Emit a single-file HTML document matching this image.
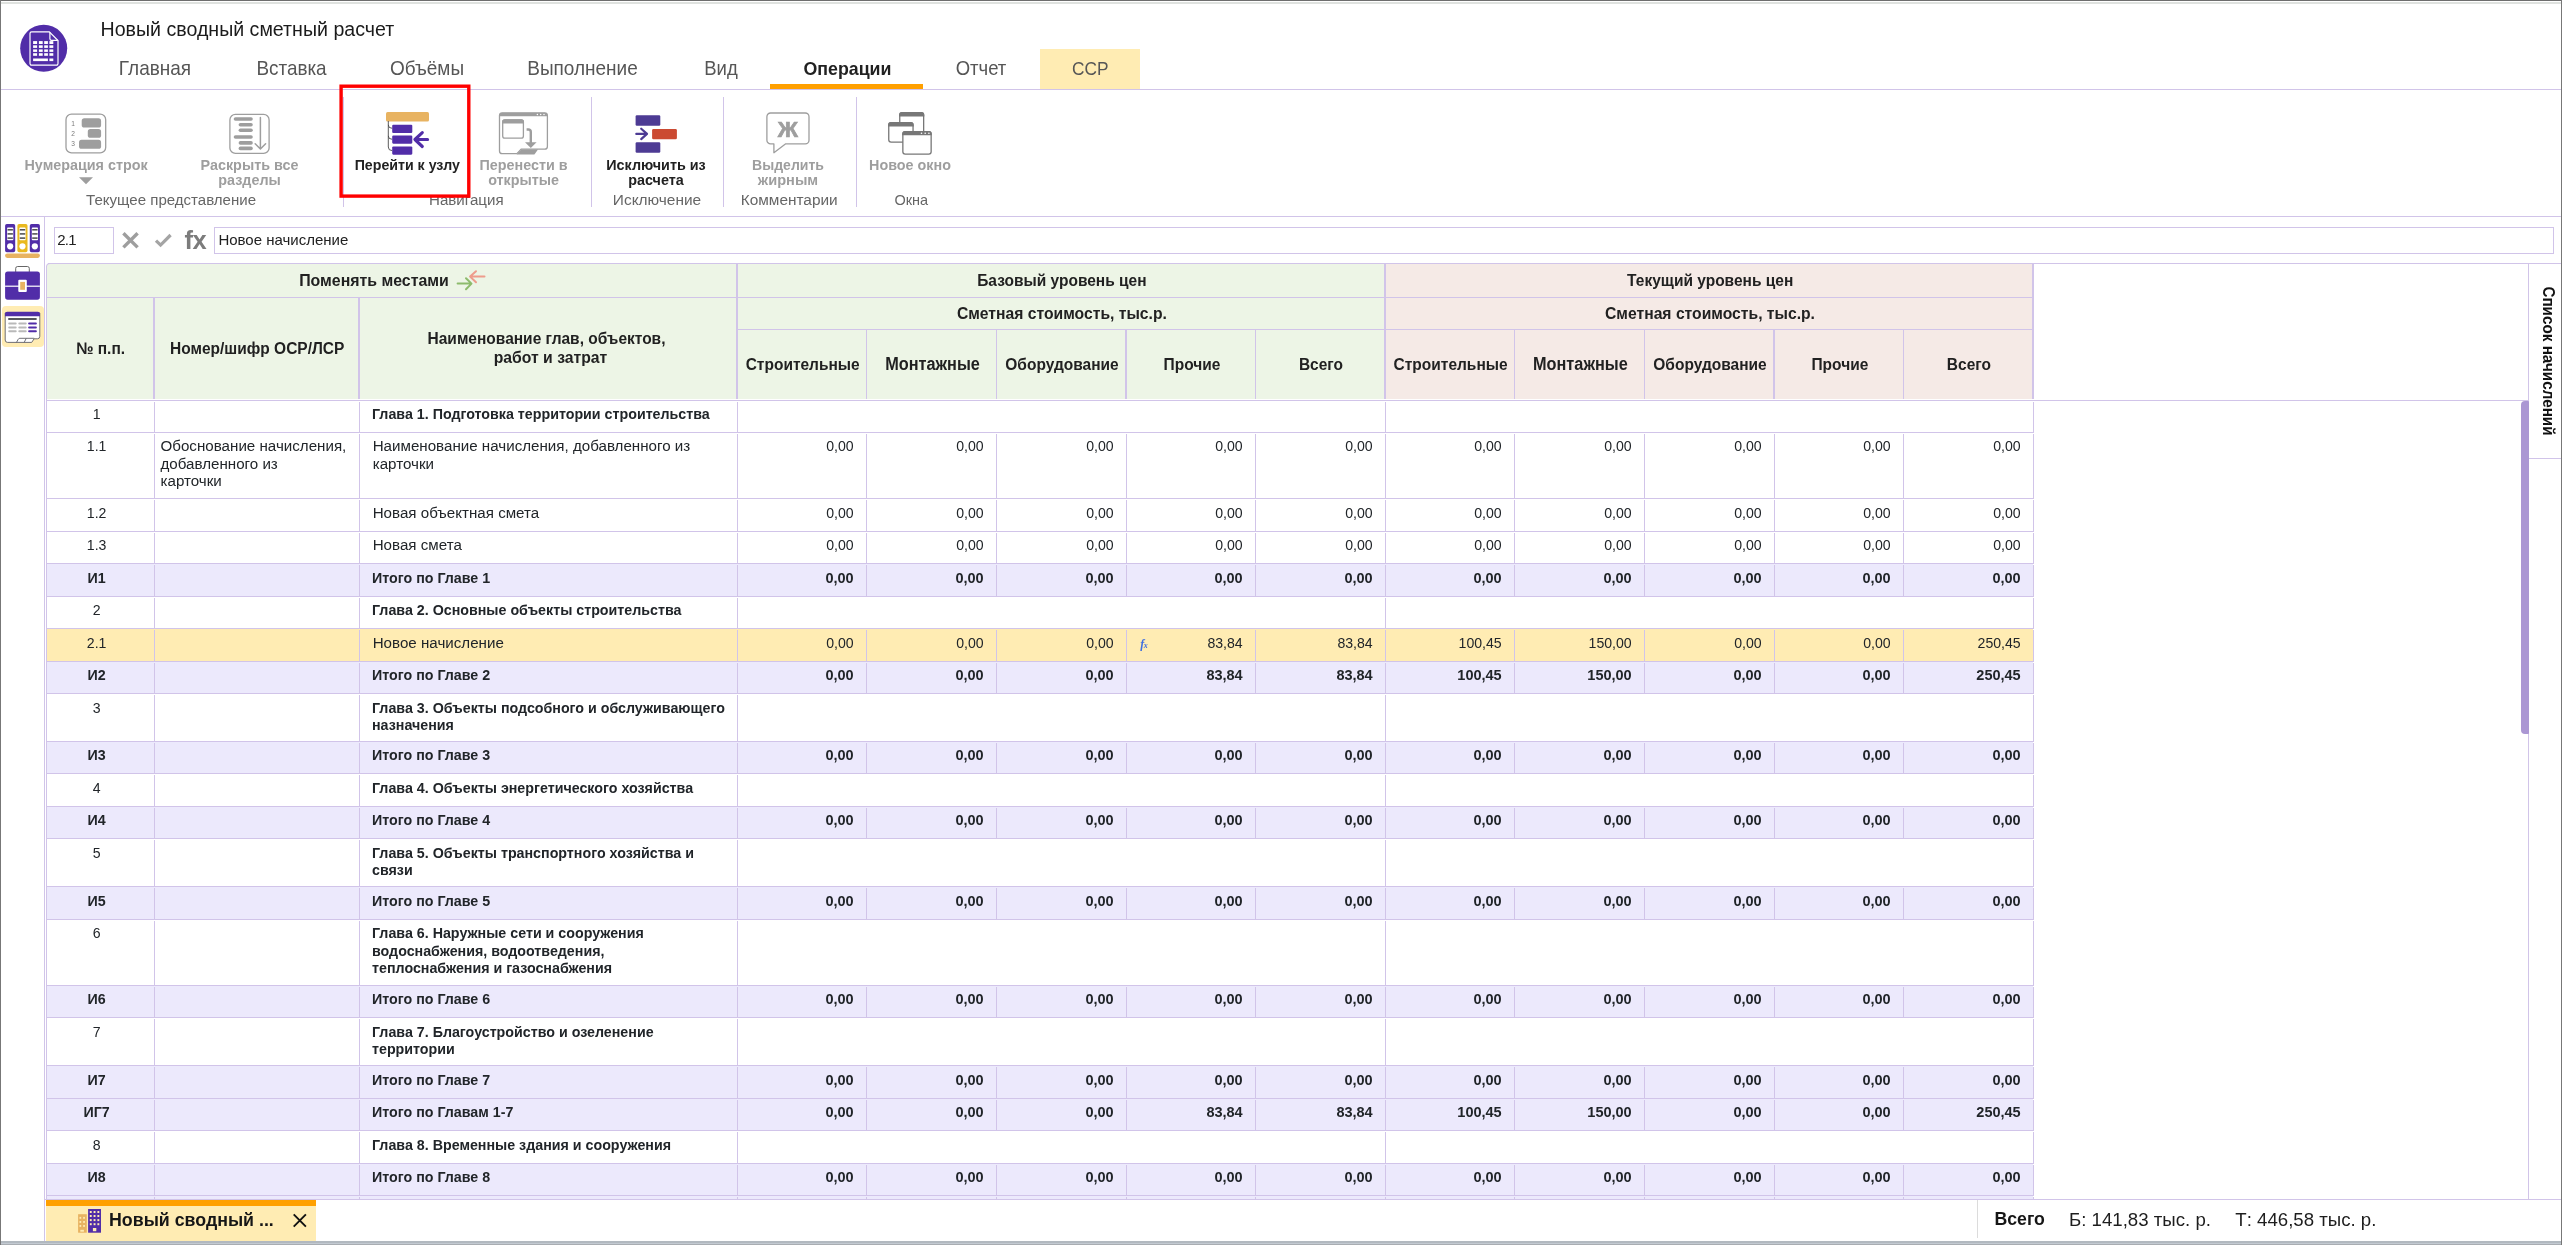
<!DOCTYPE html>
<html lang="ru"><head><meta charset="utf-8"><title>Новый сводный сметный расчет</title>
<style>
html,body{margin:0;padding:0;background:#fff;}
body{width:2562px;height:1245px;overflow:hidden;position:relative;font-family:"Liberation Sans",sans-serif;}
#app{position:absolute;left:0;top:0;width:2562px;height:1245px;overflow:hidden;will-change:transform;}
#app div,#app svg{position:absolute;}
.t{white-space:nowrap;}
</style></head>
<body><div id="app">
<svg style="left:19px;top:23px;" width="50" height="51" viewBox="19 23 50 51"><circle cx="43.7" cy="48.3" r="23.5" fill="#512da8"/><path d="M31.6 31.9 H49.3 L58 40.6 V63.6 a1.6 1.6 0 0 1 -1.6 1.6 H31.6 a1.6 1.6 0 0 1 -1.6 -1.6 V33.5 a1.6 1.6 0 0 1 1.6 -1.6 Z" fill="none" stroke="#fff" stroke-width="1.2"/><path d="M49.9 32.2 V38.7 a1.6 1.6 0 0 0 1.6 1.6 H57.7" fill="none" stroke="#fff" stroke-width="1.2"/><rect x="33.1" y="41.1" width="4.0" height="2.9" fill="#fff"/><rect x="33.1" y="45.3" width="4.0" height="2.6" fill="#fff"/><rect x="33.1" y="49.4" width="4.0" height="2.5" fill="#fff"/><rect x="33.1" y="53.2" width="4.0" height="2.6" fill="#fff"/><rect x="38.9" y="41.1" width="3.8" height="2.9" fill="#fff"/><rect x="38.9" y="45.3" width="3.8" height="2.6" fill="#fff"/><rect x="38.9" y="49.4" width="3.8" height="2.5" fill="#fff"/><rect x="38.9" y="53.2" width="3.8" height="2.6" fill="#fff"/><rect x="44.2" y="41.1" width="3.7" height="2.9" fill="#fff"/><rect x="44.2" y="45.3" width="3.7" height="2.6" fill="#fff"/><rect x="44.2" y="49.4" width="3.7" height="2.5" fill="#fff"/><rect x="44.2" y="53.2" width="3.7" height="2.6" fill="#fff"/><rect x="49.4" y="41.1" width="3.9" height="2.9" fill="#fff"/><rect x="49.4" y="45.3" width="3.9" height="2.6" fill="#fff"/><rect x="49.4" y="49.4" width="3.9" height="2.5" fill="#fff"/><rect x="49.4" y="53.2" width="3.9" height="2.6" fill="#fff"/><rect x="33.1" y="58.5" width="14.8" height="2.6" fill="#fff"/><rect x="49.4" y="58.5" width="3.9" height="2.6" fill="#fff"/></svg>
<div class="t" style="top:18px;font-size:19.6px;line-height:22px;color:#1b1b1b;left:100.5px;">Новый сводный сметный расчет</div>
<div style="left:1040px;top:49px;width:100px;height:40px;background:#ffecb3;"></div>
<div class="t" style="top:58px;font-size:19px;line-height:21px;color:#565656;left:75px;width:160px;text-align:center;transform:scaleY(1.07);transform-origin:50% 17px;">Главная</div>
<div class="t" style="top:58px;font-size:18.9px;line-height:21px;color:#565656;left:211.5px;width:160px;text-align:center;transform:scaleY(1.07);transform-origin:50% 17px;">Вставка</div>
<div class="t" style="top:58px;font-size:19px;line-height:21px;color:#565656;left:347px;width:160px;text-align:center;transform:scaleY(1.07);transform-origin:50% 17px;">Объёмы</div>
<div class="t" style="top:58px;font-size:19px;line-height:21px;color:#565656;left:502.5px;width:160px;text-align:center;transform:scaleY(1.07);transform-origin:50% 17px;">Выполнение</div>
<div class="t" style="top:58px;font-size:18.5px;line-height:21px;color:#565656;left:641px;width:160px;text-align:center;transform:scaleY(1.07);transform-origin:50% 17px;">Вид</div>
<div class="t" style="top:58px;font-size:18.5px;line-height:21px;color:#565656;left:901px;width:160px;text-align:center;transform:scaleY(1.07);transform-origin:50% 17px;">Отчет</div>
<div class="t" style="top:59px;font-size:17.3px;line-height:20px;color:#565656;left:1010.2px;width:160px;text-align:center;transform:scaleY(1.07);transform-origin:50% 16px;">ССР</div>
<div class="t" style="top:59px;font-size:17.75px;line-height:20px;font-weight:bold;color:#212121;left:767.5px;width:160px;text-align:center;">Операции</div>
<div style="left:1px;top:89px;width:2560px;height:1px;background:#d1c4e9;"></div>
<div style="left:770px;top:84px;width:153px;height:5px;background:#ffa000;"></div>
<div style="left:343px;top:97px;width:1px;height:110px;background:#d1c4e9;"></div>
<div style="left:591px;top:97px;width:1px;height:110px;background:#d1c4e9;"></div>
<div style="left:723px;top:97px;width:1px;height:110px;background:#d1c4e9;"></div>
<div style="left:856px;top:97px;width:1px;height:110px;background:#d1c4e9;"></div>
<svg style="left:63px;top:111px;" width="46" height="46" viewBox="63 111 46 46"><rect x="66" y="114.2" width="39.7" height="38.7" rx="5.5" ry="5.5" fill="none" stroke="#9e9e9e" stroke-width="1.3"/><rect x="81.7" y="118.3" width="19.4" height="9.2" rx="2.6" ry="2.6" fill="#9e9e9e"/><rect x="87.8" y="129.1" width="13.3" height="8.7" rx="2.6" ry="2.6" fill="#9e9e9e"/><rect x="79" y="139.8" width="22.1" height="9" rx="2.6" ry="2.6" fill="#9e9e9e"/><text x="73.2" y="126.2" font-size="6.6" text-anchor="middle" fill="#7a7a7a" font-family='"Liberation Sans",sans-serif'>1</text><text x="73.2" y="136" font-size="6.6" text-anchor="middle" fill="#7a7a7a" font-family='"Liberation Sans",sans-serif'>2</text><text x="73.2" y="145.8" font-size="6.6" text-anchor="middle" fill="#7a7a7a" font-family='"Liberation Sans",sans-serif'>3</text></svg>
<svg style="left:227px;top:111px;" width="46" height="46" viewBox="227 111 46 46"><rect x="229.9" y="114.4" width="39.2" height="39" rx="5.5" ry="5.5" fill="none" stroke="#9e9e9e" stroke-width="1.3"/><rect x="233.7" y="117.2" width="19.1" height="3.6" rx="1.8" ry="1.8" fill="#9e9e9e"/><rect x="238.6" y="122.9" width="14.2" height="3.7" rx="1.8" ry="1.8" fill="#9e9e9e"/><rect x="238.6" y="128.4" width="14.2" height="3.7" rx="1.8" ry="1.8" fill="#9e9e9e"/><rect x="233.7" y="135.2" width="19.1" height="3.6" rx="1.8" ry="1.8" fill="#9e9e9e"/><rect x="238.6" y="141.1" width="14.2" height="3.6" rx="1.8" ry="1.8" fill="#9e9e9e"/><rect x="238.6" y="146.6" width="14.2" height="3.6" rx="1.8" ry="1.8" fill="#9e9e9e"/><path d="M260.4 117.5 V148.6 M255.2 143.8 L260.4 149 L265.6 143.8" fill="none" stroke="#9e9e9e" stroke-width="1.5" stroke-linecap="round" stroke-linejoin="round"/></svg>
<svg style="left:384px;top:110px;" width="48" height="47" viewBox="384 110 48 47"><rect x="386" y="112.1" width="43" height="9.4" rx="1.6" ry="1.6" fill="#e8b361"/><path d="M388.3 121 V147 q0 3.6 3.9 3.6 M388.3 124.9 q0 3.4 3.9 3.4 M388.3 135.9 q0 3.4 3.9 3.4" fill="none" stroke="#4a4a4a" stroke-width="0.9"/><rect x="392.2" y="124.7" width="20.1" height="8.3" rx="1.1" ry="1.1" fill="#512da8"/><rect x="392.2" y="135.6" width="20.1" height="8.1" rx="1.1" ry="1.1" fill="#512da8"/><rect x="392.2" y="146.4" width="20.1" height="8.3" rx="1.1" ry="1.1" fill="#512da8"/><path d="M427.6 139.5 H416 M422.3 132.6 L414.9 139.5 L422.3 146.5" fill="none" stroke="#512da8" stroke-width="3.1" stroke-linecap="round" stroke-linejoin="round"/></svg>
<svg style="left:496px;top:110px;" width="55" height="47" viewBox="496 110 55 47"><path d="M502.2 112.8 H544.7 a2.7 2.7 0 0 1 2.7 2.7 V146.4 a2.7 2.7 0 0 1 -2.7 2.7 H521.2 L516.9 153.7 H502.2 a2.7 2.7 0 0 1 -2.7 -2.7 V115.5 a2.7 2.7 0 0 1 2.7 -2.7 Z" fill="none" stroke="#9e9e9e" stroke-width="1.3"/><path d="M499.4 116.3 V115.5 a2.8 2.8 0 0 1 2.8 -2.8 H544.7 a2.8 2.8 0 0 1 2.8 2.8 V116.3 Z" fill="#9e9e9e"/><circle cx="537.4" cy="114.5" r="0.75" fill="#fff"/><circle cx="540.7" cy="114.5" r="0.75" fill="#fff"/><circle cx="544" cy="114.5" r="0.75" fill="#fff"/><path d="M521.4 149.4 H538 L534.4 154.4 H516.6 Z" fill="#9e9e9e"/><rect x="502.7" y="119.8" width="20.7" height="18.4" rx="2.2" ry="2.2" fill="none" stroke="#9e9e9e" stroke-width="1.3"/><path d="M502.1 123.6 V122 a2.8 2.8 0 0 1 2.8 -2.8 H521.2 a2.8 2.8 0 0 1 2.8 2.8 V123.6 Z" fill="#9e9e9e"/><path d="M526.6 129.5 H528.3 a2.5 2.5 0 0 1 2.5 2.5 V143" fill="none" stroke="#9e9e9e" stroke-width="2.4"/><path d="M525 142.3 H536.6 L530.8 148 Z" fill="#9e9e9e"/></svg>
<svg style="left:633px;top:113px;" width="47" height="42" viewBox="633 113 47 42"><rect x="635.6" y="115.3" width="24.7" height="10.4" rx="1.3" ry="1.3" fill="#4d3b94"/><rect x="635.6" y="142.2" width="24.7" height="10.5" rx="1.3" ry="1.3" fill="#4d3b94"/><rect x="652.1" y="128.9" width="24.8" height="10.4" rx="1.3" ry="1.3" fill="#cb4a32"/><path d="M636.3 133.9 H646.3 M641.2 128.7 L647 133.9 L641.2 139.1" fill="none" stroke="#4d3b94" stroke-width="2.2" stroke-linecap="round" stroke-linejoin="round"/></svg>
<svg style="left:764px;top:110px;" width="48" height="46" viewBox="764 110 48 46"><path d="M770.6 113 H805.3 a3.7 3.7 0 0 1 3.7 3.7 V140.2 a3.7 3.7 0 0 1 -3.7 3.7 H785.4 L773.9 152.7 V143.9 H770.6 a3.7 3.7 0 0 1 -3.7 -3.7 V116.7 a3.7 3.7 0 0 1 3.7 -3.7 Z" fill="none" stroke="#9e9e9e" stroke-width="1.3" stroke-linejoin="round"/><text x="787.9" y="136.7" font-size="22.3" font-weight="bold" text-anchor="middle" fill="#9e9e9e" stroke="#9e9e9e" stroke-width="0.7" font-family='"Liberation Sans",sans-serif'>Ж</text></svg>
<svg style="left:886px;top:110px;" width="48" height="47" viewBox="886 110 48 47"><rect x="899.75" y="112.75" width="23.9" height="22.6" rx="2.4" ry="2.4" fill="#fff" stroke="#777" stroke-width="1.3"/><path d="M899.1 116.5 V115.1 a3 3 0 0 1 3 -3 H921.3 a3 3 0 0 1 3 3 V116.5 Z" fill="#777"/><rect x="888.75" y="122.75" width="24.3" height="19.3" rx="2.4" ry="2.4" fill="#fff" stroke="#777" stroke-width="1.3"/><path d="M888.1 126.5 V125.1 a3 3 0 0 1 3 -3 H910.7 a3 3 0 0 1 3 3 V126.5 Z" fill="#777"/><rect x="902.85" y="131.55" width="28.3" height="22.5" rx="2.4" ry="2.4" fill="#fff" stroke="#777" stroke-width="1.3"/><path d="M902.2 135.3 V133.9 a3 3 0 0 1 3 -3 H928.8 a3 3 0 0 1 3 3 V135.3 Z" fill="#777"/><circle cx="921.5" cy="133.3" r="0.8" fill="#fff"/><circle cx="925.2" cy="133.3" r="0.8" fill="#fff"/><circle cx="928.9" cy="133.3" r="0.8" fill="#fff"/></svg>
<div class="t" style="top:157px;font-size:14.35px;line-height:16px;font-weight:bold;color:#9e9e9e;left:-13.9px;width:200px;text-align:center;">Нумерация строк</div>
<div class="t" style="top:157px;font-size:14.35px;line-height:16px;font-weight:bold;color:#9e9e9e;left:149.5px;width:200px;text-align:center;">Раскрыть все</div>
<div class="t" style="top:172px;font-size:14.35px;line-height:16px;font-weight:bold;color:#9e9e9e;left:149.5px;width:200px;text-align:center;">разделы</div>
<div class="t" style="top:157px;font-size:14.2px;line-height:16px;font-weight:bold;color:#212121;left:307.3px;width:200px;text-align:center;">Перейти к узлу</div>
<div class="t" style="top:157px;font-size:14.35px;line-height:16px;font-weight:bold;color:#9e9e9e;left:423.6px;width:200px;text-align:center;">Перенести в</div>
<div class="t" style="top:172px;font-size:14.35px;line-height:16px;font-weight:bold;color:#9e9e9e;left:423.6px;width:200px;text-align:center;">открытые</div>
<div class="t" style="top:157px;font-size:14.35px;line-height:16px;font-weight:bold;color:#212121;left:556px;width:200px;text-align:center;">Исключить из</div>
<div class="t" style="top:172px;font-size:14.35px;line-height:16px;font-weight:bold;color:#212121;left:556px;width:200px;text-align:center;">расчета</div>
<div class="t" style="top:157px;font-size:14.05px;line-height:16px;font-weight:bold;color:#9e9e9e;left:688px;width:200px;text-align:center;">Выделить</div>
<div class="t" style="top:172px;font-size:14.6px;line-height:16px;font-weight:bold;color:#9e9e9e;left:688px;width:200px;text-align:center;">жирным</div>
<div class="t" style="top:157px;font-size:14.35px;line-height:16px;font-weight:bold;color:#9e9e9e;left:810px;width:200px;text-align:center;">Новое окно</div>
<svg style="left:78px;top:176px;" width="16" height="10" viewBox="78 176 16 10"><path d="M79 177.2 H93 L86 184.2 Z" fill="#9e9e9e"/></svg>
<div class="t" style="top:191px;font-size:15.05px;line-height:17px;color:#666;left:41.1px;width:260px;text-align:center;">Текущее представление</div>
<div class="t" style="top:191px;font-size:15.1px;line-height:17px;color:#666;left:336.3px;width:260px;text-align:center;">Навигация</div>
<div class="t" style="top:191px;font-size:15.45px;line-height:17px;color:#666;left:527px;width:260px;text-align:center;">Исключение</div>
<div class="t" style="top:191px;font-size:15.4px;line-height:17px;color:#666;left:659.2px;width:260px;text-align:center;">Комментарии</div>
<div class="t" style="top:192px;font-size:14.5px;line-height:16px;color:#666;left:781.3px;width:260px;text-align:center;">Окна</div>
<svg style="left:338px;top:83px;" width="134" height="116" viewBox="338 83 134 116"><rect x="341.1" y="86.2" width="127.7" height="109.9" fill="none" stroke="#ff0000" stroke-width="3.4"/></svg>
<div style="left:1px;top:216px;width:2560px;height:1px;background:#d1c4e9;"></div>
<div style="left:44px;top:217px;width:1px;height:1024px;background:#d1c4e9;"></div>
<svg style="left:3px;top:222px;" width="40" height="38" viewBox="3 222 40 38"><rect x="5.1" y="224.1" width="10.1" height="28.2" rx="1.7" ry="1.7" fill="#512da8"/><rect x="7.1" y="227.6" width="6.2" height="12.6" rx="0.8" ry="0.8" fill="#fff"/><path d="M7.5 229.8 H12.9" stroke="#4a4a4a" stroke-width="1.5"/><path d="M7.5 233.9 H12.9" stroke="#4a4a4a" stroke-width="1.5"/><path d="M7.5 238.1 H12.9" stroke="#4a4a4a" stroke-width="1.5"/><circle cx="10.15" cy="246.3" r="3.1" fill="#fff"/><rect x="17.4" y="224.1" width="10.1" height="28.2" rx="1.7" ry="1.7" fill="#e9b91f"/><rect x="19.4" y="227.6" width="6.2" height="12.6" rx="0.8" ry="0.8" fill="#fff"/><path d="M19.8 229.8 H25.2" stroke="#4a4a4a" stroke-width="1.5"/><path d="M19.8 233.9 H25.2" stroke="#4a4a4a" stroke-width="1.5"/><path d="M19.8 238.1 H25.2" stroke="#4a4a4a" stroke-width="1.5"/><circle cx="22.45" cy="246.3" r="3.1" fill="#fff"/><rect x="29.8" y="224.1" width="10.1" height="28.2" rx="1.7" ry="1.7" fill="#512da8"/><rect x="31.8" y="227.6" width="6.2" height="12.6" rx="0.8" ry="0.8" fill="#fff"/><path d="M32.2 229.8 H37.6" stroke="#4a4a4a" stroke-width="1.5"/><path d="M32.2 233.9 H37.6" stroke="#4a4a4a" stroke-width="1.5"/><path d="M32.2 238.1 H37.6" stroke="#4a4a4a" stroke-width="1.5"/><circle cx="34.85" cy="246.3" r="3.1" fill="#fff"/><rect x="5.1" y="253.4" width="34.8" height="4.5" rx="2.1" ry="2.1" fill="#e8b361"/></svg>
<svg style="left:3px;top:264px;" width="40" height="38" viewBox="3 264 40 38"><path d="M15.7 272 V268.4 a1.9 1.9 0 0 1 1.9 -1.9 H27.4 a1.9 1.9 0 0 1 1.9 1.9 V272" fill="none" stroke="#555" stroke-width="0.9"/><rect x="5.1" y="271.6" width="34.8" height="28.1" rx="2.6" ry="2.6" fill="#512da8"/><rect x="5.1" y="285.6" width="34.8" height="1.2" fill="#fff"/><rect x="18.3" y="279.8" width="8.5" height="12.2" rx="1" ry="1" fill="#fff"/><rect x="20.2" y="281.9" width="4.8" height="7.9" fill="#e8b361"/></svg>
<div style="left:1.6px;top:306.1px;width:42.2px;height:40.8px;background:#ffecb3;border-radius:4px;"></div>
<svg style="left:3px;top:309px;" width="40" height="36" viewBox="3 309 40 36"><path d="M5.2 313 V340 a2.4 2.4 0 0 0 2.4 2.4 H31.7 L34.1 338.8 H37.4 a2.4 2.4 0 0 0 2.4 -2.4 V313 Z" fill="#fff" stroke="#5f5f66" stroke-width="0.9" stroke-linejoin="round"/><path d="M5 316.2 V314 a2.2 2.2 0 0 1 2.2 -2.2 H37.8 a2.2 2.2 0 0 1 2.2 2.2 V316.2 Z" fill="#512da8"/><rect x="8" y="318.1" width="28.9" height="2" rx="1" fill="#55555c"/><path d="M9.2 323.5 H15.7 M19.3 323.5 H25.7" stroke="#b9b9b9" stroke-width="2" stroke-linecap="round"/><path d="M29.1 323.5 H35.9" stroke="#512da8" stroke-width="2" stroke-linecap="round"/><path d="M9.2 327.5 H15.7 M19.3 327.5 H25.7" stroke="#b9b9b9" stroke-width="2" stroke-linecap="round"/><path d="M29.1 327.5 H35.9" stroke="#512da8" stroke-width="2" stroke-linecap="round"/><path d="M9.2 331.3 H15.7 M19.3 331.3 H25.7" stroke="#b9b9b9" stroke-width="2" stroke-linecap="round"/><path d="M29.1 331.3 H35.9" stroke="#512da8" stroke-width="2" stroke-linecap="round"/><path d="M16.5 342.4 L18.2 339.3 a1.8 1.8 0 0 1 1.6 -1 H34.2 M24.2 342.4 L26.2 338.4" fill="none" stroke="#5f5f66" stroke-width="0.9"/></svg>
<div style="left:54px;top:227px;width:60px;height:27px;background:#fff;border:1px solid #d1c4e9;box-sizing:border-box;"></div>
<div class="t" style="top:231px;font-size:15px;line-height:17px;color:#212121;left:57.2px;letter-spacing:-0.7px;">2.1</div>
<svg style="left:120px;top:229px;" width="56" height="23" viewBox="120 229 56 23"><path d="M123.4 233.2 L137.6 247.4 M137.6 233.2 L123.4 247.4" stroke="#9e9e9e" stroke-width="3.4"/><path d="M156 240.6 L160.6 245.1 L170.6 235" fill="none" stroke="#a4a4a4" stroke-width="3.2"/></svg>
<div class="t" style="top:226px;font-size:25.5px;line-height:28px;font-weight:bold;color:#7c7c7c;left:184.5px;letter-spacing:-0.6px;">fx</div>
<div style="left:214px;top:227px;width:2340px;height:27px;background:#fff;border:1px solid #d1c4e9;box-sizing:border-box;"></div>
<div class="t" style="top:231px;font-size:15px;line-height:17px;color:#212121;left:218.4px;">Новое начисление</div>
<div style="left:46px;top:266px;width:1px;height:933px;background:#d1c4e9;"></div>
<div style="left:48px;top:263px;width:2514px;height:1px;background:#d1c4e9;"></div>
<div style="left:46px;top:263px;width:1988px;height:136px;background:#d1c4e9;border-top-left-radius:4px;"></div>
<div style="left:47px;top:264px;width:689px;height:33px;background:#edf5e6;border-top-left-radius:3px;"></div>
<div style="left:738px;top:264px;width:646px;height:33px;background:#edf5e6;"></div>
<div style="left:1386px;top:264px;width:646px;height:33px;background:#f5eae6;"></div>
<div style="left:47px;top:298px;width:106px;height:101px;background:#edf5e6;"></div>
<div style="left:155px;top:298px;width:203px;height:101px;background:#edf5e6;"></div>
<div style="left:360px;top:298px;width:376px;height:101px;background:#edf5e6;"></div>
<div style="left:738px;top:298px;width:646px;height:31px;background:#edf5e6;"></div>
<div style="left:1386px;top:298px;width:646px;height:31px;background:#f5eae6;"></div>
<div style="left:738px;top:330px;width:128px;height:69px;background:#edf5e6;"></div>
<div style="left:867px;top:330px;width:129px;height:69px;background:#edf5e6;"></div>
<div style="left:997px;top:330px;width:128px;height:69px;background:#edf5e6;"></div>
<div style="left:1127px;top:330px;width:128px;height:69px;background:#edf5e6;"></div>
<div style="left:1256px;top:330px;width:128px;height:69px;background:#edf5e6;"></div>
<div style="left:1386px;top:330px;width:128px;height:69px;background:#f5eae6;"></div>
<div style="left:1515px;top:330px;width:129px;height:69px;background:#f5eae6;"></div>
<div style="left:1645px;top:330px;width:128px;height:69px;background:#f5eae6;"></div>
<div style="left:1775px;top:330px;width:128px;height:69px;background:#f5eae6;"></div>
<div style="left:1904px;top:330px;width:128px;height:69px;background:#f5eae6;"></div>
<div class="t" style="top:272px;font-size:15.9px;line-height:17px;font-weight:bold;color:#212121;left:174px;width:400px;text-align:center;transform:scaleY(1.07);transform-origin:50% 14px;">Поменять местами</div>
<svg style="left:455px;top:268px;" width="32" height="24" viewBox="455 268 32 24"><path d="M457.6 283.6 H471 M466 278.3 L471.5 283.6 L466 289.2" fill="none" stroke="#8dbb6c" stroke-width="2" stroke-linecap="round" stroke-linejoin="round"/><path d="M484.5 276.6 H470.6 M476 271.2 L470.1 276.6 L476 282.3" fill="none" stroke="#ee9c8c" stroke-width="2" stroke-linecap="round" stroke-linejoin="round"/></svg>
<div class="t" style="top:340px;font-size:15.5px;line-height:17px;font-weight:bold;color:#212121;left:-99.4px;width:400px;text-align:center;transform:scaleY(1.07);transform-origin:50% 14px;">№ п.п.</div>
<div class="t" style="top:340px;font-size:15.5px;line-height:17px;font-weight:bold;color:#212121;left:57.2px;width:400px;text-align:center;transform:scaleY(1.07);transform-origin:50% 14px;">Номер/шифр ОСР/ЛСР</div>
<div class="t" style="top:330px;font-size:15.5px;line-height:17px;font-weight:bold;color:#212121;left:346.5px;width:400px;text-align:center;transform:scaleY(1.07);transform-origin:50% 14px;">Наименование глав, объектов,</div>
<div class="t" style="top:349px;font-size:15.75px;line-height:17px;font-weight:bold;color:#212121;left:350.5px;width:400px;text-align:center;transform:scaleY(1.07);transform-origin:50% 14px;">работ и затрат</div>
<div class="t" style="top:272px;font-size:15.5px;line-height:17px;font-weight:bold;color:#212121;left:861.9px;width:400px;text-align:center;transform:scaleY(1.07);transform-origin:50% 14px;">Базовый уровень цен</div>
<div class="t" style="top:305px;font-size:15.7px;line-height:17px;font-weight:bold;color:#212121;left:861.9px;width:400px;text-align:center;transform:scaleY(1.07);transform-origin:50% 14px;">Сметная стоимость, тыс.р.</div>
<div class="t" style="top:272px;font-size:15.5px;line-height:17px;font-weight:bold;color:#212121;left:1510.2px;width:400px;text-align:center;transform:scaleY(1.07);transform-origin:50% 14px;">Текущий уровень цен</div>
<div class="t" style="top:305px;font-size:15.7px;line-height:17px;font-weight:bold;color:#212121;left:1510px;width:400px;text-align:center;transform:scaleY(1.07);transform-origin:50% 14px;">Сметная стоимость, тыс.р.</div>
<div class="t" style="top:356px;font-size:15.5px;line-height:17px;font-weight:bold;color:#212121;left:602.7px;width:400px;text-align:center;transform:scaleY(1.07);transform-origin:50% 14px;">Строительные</div>
<div class="t" style="top:355px;font-size:16.3px;line-height:18px;font-weight:bold;color:#212121;left:732.5px;width:400px;text-align:center;transform:scaleY(1.07);transform-origin:50% 15px;">Монтажные</div>
<div class="t" style="top:356px;font-size:15.5px;line-height:17px;font-weight:bold;color:#212121;left:862px;width:400px;text-align:center;transform:scaleY(1.07);transform-origin:50% 14px;">Оборудование</div>
<div class="t" style="top:356px;font-size:15.5px;line-height:17px;font-weight:bold;color:#212121;left:992px;width:400px;text-align:center;transform:scaleY(1.07);transform-origin:50% 14px;">Прочие</div>
<div class="t" style="top:356px;font-size:15.5px;line-height:17px;font-weight:bold;color:#212121;left:1121px;width:400px;text-align:center;transform:scaleY(1.07);transform-origin:50% 14px;">Всего</div>
<div class="t" style="top:356px;font-size:15.5px;line-height:17px;font-weight:bold;color:#212121;left:1250.6px;width:400px;text-align:center;transform:scaleY(1.07);transform-origin:50% 14px;">Строительные</div>
<div class="t" style="top:355px;font-size:16.3px;line-height:18px;font-weight:bold;color:#212121;left:1380.4px;width:400px;text-align:center;transform:scaleY(1.07);transform-origin:50% 15px;">Монтажные</div>
<div class="t" style="top:356px;font-size:15.5px;line-height:17px;font-weight:bold;color:#212121;left:1510px;width:400px;text-align:center;transform:scaleY(1.07);transform-origin:50% 14px;">Оборудование</div>
<div class="t" style="top:356px;font-size:15.5px;line-height:17px;font-weight:bold;color:#212121;left:1639.9px;width:400px;text-align:center;transform:scaleY(1.07);transform-origin:50% 14px;">Прочие</div>
<div class="t" style="top:356px;font-size:15.5px;line-height:17px;font-weight:bold;color:#212121;left:1768.9px;width:400px;text-align:center;transform:scaleY(1.07);transform-origin:50% 14px;">Всего</div>
<div style="left:46px;top:400px;width:2482px;height:1px;background:#d1c4e9;"></div>
<div style="left:154px;top:402px;width:1px;height:29.5px;background:#d1c4e9;"></div>
<div style="left:359px;top:402px;width:1px;height:29.5px;background:#d1c4e9;"></div>
<div style="left:737px;top:402px;width:1px;height:29.5px;background:#d1c4e9;"></div>
<div style="left:1385px;top:402px;width:1px;height:29.5px;background:#d1c4e9;"></div>
<div style="left:2033px;top:402px;width:1px;height:29.5px;background:#d1c4e9;"></div>
<div style="left:47px;top:432px;width:1987px;height:1px;background:#d1c4e9;"></div>
<div class="t" style="top:406px;font-size:14.1px;line-height:16px;color:#212529;left:46.6px;width:100px;text-align:center;">1</div>
<div class="t" style="top:406px;font-size:14.25px;line-height:16px;font-weight:bold;color:#212529;left:372px;">Глава 1. Подготовка территории строительства</div>
<div style="left:154px;top:434px;width:1px;height:63.5px;background:#d1c4e9;"></div>
<div style="left:359px;top:434px;width:1px;height:63.5px;background:#d1c4e9;"></div>
<div style="left:737px;top:434px;width:1px;height:63.5px;background:#d1c4e9;"></div>
<div style="left:866px;top:434px;width:1px;height:63.5px;background:#d1c4e9;"></div>
<div style="left:996px;top:434px;width:1px;height:63.5px;background:#d1c4e9;"></div>
<div style="left:1126px;top:434px;width:1px;height:63.5px;background:#d1c4e9;"></div>
<div style="left:1255px;top:434px;width:1px;height:63.5px;background:#d1c4e9;"></div>
<div style="left:1385px;top:434px;width:1px;height:63.5px;background:#d1c4e9;"></div>
<div style="left:1514px;top:434px;width:1px;height:63.5px;background:#d1c4e9;"></div>
<div style="left:1644px;top:434px;width:1px;height:63.5px;background:#d1c4e9;"></div>
<div style="left:1774px;top:434px;width:1px;height:63.5px;background:#d1c4e9;"></div>
<div style="left:1903px;top:434px;width:1px;height:63.5px;background:#d1c4e9;"></div>
<div style="left:2033px;top:434px;width:1px;height:63.5px;background:#d1c4e9;"></div>
<div style="left:47px;top:498px;width:1987px;height:1px;background:#d1c4e9;"></div>
<div class="t" style="top:438px;font-size:14.1px;line-height:16px;color:#212529;left:46.6px;width:100px;text-align:center;">1.1</div>
<div class="t" style="top:437px;font-size:15.15px;line-height:17px;color:#212529;left:160.5px;transform:scaleY(0.94);transform-origin:0 14px;">Обоснование начисления,</div>
<div class="t" style="top:455px;font-size:15.15px;line-height:17px;color:#212529;left:160.5px;transform:scaleY(0.94);transform-origin:0 14px;">добавленного из</div>
<div class="t" style="top:472px;font-size:15.15px;line-height:17px;color:#212529;left:160.5px;transform:scaleY(0.94);transform-origin:0 14px;">карточки</div>
<div class="t" style="top:437px;font-size:15.15px;line-height:17px;color:#212529;left:372.7px;transform:scaleY(0.94);transform-origin:0 14px;">Наименование начисления, добавленного из</div>
<div class="t" style="top:455px;font-size:15.15px;line-height:17px;color:#212529;left:372.7px;transform:scaleY(0.94);transform-origin:0 14px;">карточки</div>
<div class="t" style="top:438px;font-size:14.1px;line-height:16px;color:#212529;left:743.7px;width:110px;text-align:right;">0,00</div>
<div class="t" style="top:438px;font-size:14.1px;line-height:16px;color:#212529;left:873.7px;width:110px;text-align:right;">0,00</div>
<div class="t" style="top:438px;font-size:14.1px;line-height:16px;color:#212529;left:1003.7px;width:110px;text-align:right;">0,00</div>
<div class="t" style="top:438px;font-size:14.1px;line-height:16px;color:#212529;left:1132.7px;width:110px;text-align:right;">0,00</div>
<div class="t" style="top:438px;font-size:14.1px;line-height:16px;color:#212529;left:1262.7px;width:110px;text-align:right;">0,00</div>
<div class="t" style="top:438px;font-size:14.1px;line-height:16px;color:#212529;left:1391.7px;width:110px;text-align:right;">0,00</div>
<div class="t" style="top:438px;font-size:14.1px;line-height:16px;color:#212529;left:1521.7px;width:110px;text-align:right;">0,00</div>
<div class="t" style="top:438px;font-size:14.1px;line-height:16px;color:#212529;left:1651.7px;width:110px;text-align:right;">0,00</div>
<div class="t" style="top:438px;font-size:14.1px;line-height:16px;color:#212529;left:1780.7px;width:110px;text-align:right;">0,00</div>
<div class="t" style="top:438px;font-size:14.1px;line-height:16px;color:#212529;left:1910.7px;width:110px;text-align:right;">0,00</div>
<div style="left:154px;top:500px;width:1px;height:30.5px;background:#d1c4e9;"></div>
<div style="left:359px;top:500px;width:1px;height:30.5px;background:#d1c4e9;"></div>
<div style="left:737px;top:500px;width:1px;height:30.5px;background:#d1c4e9;"></div>
<div style="left:866px;top:500px;width:1px;height:30.5px;background:#d1c4e9;"></div>
<div style="left:996px;top:500px;width:1px;height:30.5px;background:#d1c4e9;"></div>
<div style="left:1126px;top:500px;width:1px;height:30.5px;background:#d1c4e9;"></div>
<div style="left:1255px;top:500px;width:1px;height:30.5px;background:#d1c4e9;"></div>
<div style="left:1385px;top:500px;width:1px;height:30.5px;background:#d1c4e9;"></div>
<div style="left:1514px;top:500px;width:1px;height:30.5px;background:#d1c4e9;"></div>
<div style="left:1644px;top:500px;width:1px;height:30.5px;background:#d1c4e9;"></div>
<div style="left:1774px;top:500px;width:1px;height:30.5px;background:#d1c4e9;"></div>
<div style="left:1903px;top:500px;width:1px;height:30.5px;background:#d1c4e9;"></div>
<div style="left:2033px;top:500px;width:1px;height:30.5px;background:#d1c4e9;"></div>
<div style="left:47px;top:531px;width:1987px;height:1px;background:#d1c4e9;"></div>
<div class="t" style="top:505px;font-size:14.1px;line-height:16px;color:#212529;left:46.6px;width:100px;text-align:center;">1.2</div>
<div class="t" style="top:504px;font-size:15.15px;line-height:17px;color:#212529;left:372.7px;transform:scaleY(0.94);transform-origin:0 14px;">Новая объектная смета</div>
<div class="t" style="top:505px;font-size:14.1px;line-height:16px;color:#212529;left:743.7px;width:110px;text-align:right;">0,00</div>
<div class="t" style="top:505px;font-size:14.1px;line-height:16px;color:#212529;left:873.7px;width:110px;text-align:right;">0,00</div>
<div class="t" style="top:505px;font-size:14.1px;line-height:16px;color:#212529;left:1003.7px;width:110px;text-align:right;">0,00</div>
<div class="t" style="top:505px;font-size:14.1px;line-height:16px;color:#212529;left:1132.7px;width:110px;text-align:right;">0,00</div>
<div class="t" style="top:505px;font-size:14.1px;line-height:16px;color:#212529;left:1262.7px;width:110px;text-align:right;">0,00</div>
<div class="t" style="top:505px;font-size:14.1px;line-height:16px;color:#212529;left:1391.7px;width:110px;text-align:right;">0,00</div>
<div class="t" style="top:505px;font-size:14.1px;line-height:16px;color:#212529;left:1521.7px;width:110px;text-align:right;">0,00</div>
<div class="t" style="top:505px;font-size:14.1px;line-height:16px;color:#212529;left:1651.7px;width:110px;text-align:right;">0,00</div>
<div class="t" style="top:505px;font-size:14.1px;line-height:16px;color:#212529;left:1780.7px;width:110px;text-align:right;">0,00</div>
<div class="t" style="top:505px;font-size:14.1px;line-height:16px;color:#212529;left:1910.7px;width:110px;text-align:right;">0,00</div>
<div style="left:154px;top:533px;width:1px;height:29.5px;background:#d1c4e9;"></div>
<div style="left:359px;top:533px;width:1px;height:29.5px;background:#d1c4e9;"></div>
<div style="left:737px;top:533px;width:1px;height:29.5px;background:#d1c4e9;"></div>
<div style="left:866px;top:533px;width:1px;height:29.5px;background:#d1c4e9;"></div>
<div style="left:996px;top:533px;width:1px;height:29.5px;background:#d1c4e9;"></div>
<div style="left:1126px;top:533px;width:1px;height:29.5px;background:#d1c4e9;"></div>
<div style="left:1255px;top:533px;width:1px;height:29.5px;background:#d1c4e9;"></div>
<div style="left:1385px;top:533px;width:1px;height:29.5px;background:#d1c4e9;"></div>
<div style="left:1514px;top:533px;width:1px;height:29.5px;background:#d1c4e9;"></div>
<div style="left:1644px;top:533px;width:1px;height:29.5px;background:#d1c4e9;"></div>
<div style="left:1774px;top:533px;width:1px;height:29.5px;background:#d1c4e9;"></div>
<div style="left:1903px;top:533px;width:1px;height:29.5px;background:#d1c4e9;"></div>
<div style="left:2033px;top:533px;width:1px;height:29.5px;background:#d1c4e9;"></div>
<div style="left:47px;top:563px;width:1987px;height:1px;background:#d1c4e9;"></div>
<div class="t" style="top:537px;font-size:14.1px;line-height:16px;color:#212529;left:46.6px;width:100px;text-align:center;">1.3</div>
<div class="t" style="top:536px;font-size:15.15px;line-height:17px;color:#212529;left:372.7px;transform:scaleY(0.94);transform-origin:0 14px;">Новая смета</div>
<div class="t" style="top:537px;font-size:14.1px;line-height:16px;color:#212529;left:743.7px;width:110px;text-align:right;">0,00</div>
<div class="t" style="top:537px;font-size:14.1px;line-height:16px;color:#212529;left:873.7px;width:110px;text-align:right;">0,00</div>
<div class="t" style="top:537px;font-size:14.1px;line-height:16px;color:#212529;left:1003.7px;width:110px;text-align:right;">0,00</div>
<div class="t" style="top:537px;font-size:14.1px;line-height:16px;color:#212529;left:1132.7px;width:110px;text-align:right;">0,00</div>
<div class="t" style="top:537px;font-size:14.1px;line-height:16px;color:#212529;left:1262.7px;width:110px;text-align:right;">0,00</div>
<div class="t" style="top:537px;font-size:14.1px;line-height:16px;color:#212529;left:1391.7px;width:110px;text-align:right;">0,00</div>
<div class="t" style="top:537px;font-size:14.1px;line-height:16px;color:#212529;left:1521.7px;width:110px;text-align:right;">0,00</div>
<div class="t" style="top:537px;font-size:14.1px;line-height:16px;color:#212529;left:1651.7px;width:110px;text-align:right;">0,00</div>
<div class="t" style="top:537px;font-size:14.1px;line-height:16px;color:#212529;left:1780.7px;width:110px;text-align:right;">0,00</div>
<div class="t" style="top:537px;font-size:14.1px;line-height:16px;color:#212529;left:1910.7px;width:110px;text-align:right;">0,00</div>
<div style="left:47px;top:564px;width:1986px;height:32px;background:#ece9fc;"></div>
<div style="left:154px;top:565px;width:1px;height:30.5px;background:#d1c4e9;"></div>
<div style="left:359px;top:565px;width:1px;height:30.5px;background:#d1c4e9;"></div>
<div style="left:737px;top:565px;width:1px;height:30.5px;background:#d1c4e9;"></div>
<div style="left:866px;top:565px;width:1px;height:30.5px;background:#d1c4e9;"></div>
<div style="left:996px;top:565px;width:1px;height:30.5px;background:#d1c4e9;"></div>
<div style="left:1126px;top:565px;width:1px;height:30.5px;background:#d1c4e9;"></div>
<div style="left:1255px;top:565px;width:1px;height:30.5px;background:#d1c4e9;"></div>
<div style="left:1385px;top:565px;width:1px;height:30.5px;background:#d1c4e9;"></div>
<div style="left:1514px;top:565px;width:1px;height:30.5px;background:#d1c4e9;"></div>
<div style="left:1644px;top:565px;width:1px;height:30.5px;background:#d1c4e9;"></div>
<div style="left:1774px;top:565px;width:1px;height:30.5px;background:#d1c4e9;"></div>
<div style="left:1903px;top:565px;width:1px;height:30.5px;background:#d1c4e9;"></div>
<div style="left:2033px;top:565px;width:1px;height:30.5px;background:#d1c4e9;"></div>
<div style="left:47px;top:596px;width:1987px;height:1px;background:#d1c4e9;"></div>
<div class="t" style="top:570px;font-size:14.25px;line-height:16px;font-weight:bold;color:#212529;left:46.6px;width:100px;text-align:center;">И1</div>
<div class="t" style="top:570px;font-size:14.25px;line-height:16px;font-weight:bold;color:#212529;left:372px;">Итого по Главе 1</div>
<div class="t" style="top:570px;font-size:14.5px;line-height:16px;font-weight:bold;color:#212529;left:743.7px;width:110px;text-align:right;">0,00</div>
<div class="t" style="top:570px;font-size:14.5px;line-height:16px;font-weight:bold;color:#212529;left:873.7px;width:110px;text-align:right;">0,00</div>
<div class="t" style="top:570px;font-size:14.5px;line-height:16px;font-weight:bold;color:#212529;left:1003.7px;width:110px;text-align:right;">0,00</div>
<div class="t" style="top:570px;font-size:14.5px;line-height:16px;font-weight:bold;color:#212529;left:1132.7px;width:110px;text-align:right;">0,00</div>
<div class="t" style="top:570px;font-size:14.5px;line-height:16px;font-weight:bold;color:#212529;left:1262.7px;width:110px;text-align:right;">0,00</div>
<div class="t" style="top:570px;font-size:14.5px;line-height:16px;font-weight:bold;color:#212529;left:1391.7px;width:110px;text-align:right;">0,00</div>
<div class="t" style="top:570px;font-size:14.5px;line-height:16px;font-weight:bold;color:#212529;left:1521.7px;width:110px;text-align:right;">0,00</div>
<div class="t" style="top:570px;font-size:14.5px;line-height:16px;font-weight:bold;color:#212529;left:1651.7px;width:110px;text-align:right;">0,00</div>
<div class="t" style="top:570px;font-size:14.5px;line-height:16px;font-weight:bold;color:#212529;left:1780.7px;width:110px;text-align:right;">0,00</div>
<div class="t" style="top:570px;font-size:14.5px;line-height:16px;font-weight:bold;color:#212529;left:1910.7px;width:110px;text-align:right;">0,00</div>
<div style="left:154px;top:598px;width:1px;height:29.5px;background:#d1c4e9;"></div>
<div style="left:359px;top:598px;width:1px;height:29.5px;background:#d1c4e9;"></div>
<div style="left:737px;top:598px;width:1px;height:29.5px;background:#d1c4e9;"></div>
<div style="left:1385px;top:598px;width:1px;height:29.5px;background:#d1c4e9;"></div>
<div style="left:2033px;top:598px;width:1px;height:29.5px;background:#d1c4e9;"></div>
<div style="left:47px;top:628px;width:1987px;height:1px;background:#d1c4e9;"></div>
<div class="t" style="top:602px;font-size:14.1px;line-height:16px;color:#212529;left:46.6px;width:100px;text-align:center;">2</div>
<div class="t" style="top:602px;font-size:14.25px;line-height:16px;font-weight:bold;color:#212529;left:372px;">Глава 2. Основные объекты строительства</div>
<div style="left:47px;top:629px;width:1986px;height:32px;background:#ffecb3;"></div>
<div style="left:154px;top:630px;width:1px;height:30.5px;background:#d1c4e9;"></div>
<div style="left:359px;top:630px;width:1px;height:30.5px;background:#d1c4e9;"></div>
<div style="left:737px;top:630px;width:1px;height:30.5px;background:#d1c4e9;"></div>
<div style="left:866px;top:630px;width:1px;height:30.5px;background:#d1c4e9;"></div>
<div style="left:996px;top:630px;width:1px;height:30.5px;background:#d1c4e9;"></div>
<div style="left:1126px;top:630px;width:1px;height:30.5px;background:#d1c4e9;"></div>
<div style="left:1255px;top:630px;width:1px;height:30.5px;background:#d1c4e9;"></div>
<div style="left:1385px;top:630px;width:1px;height:30.5px;background:#d1c4e9;"></div>
<div style="left:1514px;top:630px;width:1px;height:30.5px;background:#d1c4e9;"></div>
<div style="left:1644px;top:630px;width:1px;height:30.5px;background:#d1c4e9;"></div>
<div style="left:1774px;top:630px;width:1px;height:30.5px;background:#d1c4e9;"></div>
<div style="left:1903px;top:630px;width:1px;height:30.5px;background:#d1c4e9;"></div>
<div style="left:2033px;top:630px;width:1px;height:30.5px;background:#d1c4e9;"></div>
<div style="left:47px;top:661px;width:1987px;height:1px;background:#d1c4e9;"></div>
<div class="t" style="top:635px;font-size:14.1px;line-height:16px;color:#212529;left:46.6px;width:100px;text-align:center;">2.1</div>
<div class="t" style="top:634px;font-size:15.15px;line-height:17px;color:#212529;left:372.7px;transform:scaleY(0.94);transform-origin:0 14px;">Новое начисление</div>
<div class="t" style="top:635px;font-size:14.1px;line-height:16px;color:#212529;left:743.7px;width:110px;text-align:right;">0,00</div>
<div class="t" style="top:635px;font-size:14.1px;line-height:16px;color:#212529;left:873.7px;width:110px;text-align:right;">0,00</div>
<div class="t" style="top:635px;font-size:14.1px;line-height:16px;color:#212529;left:1003.7px;width:110px;text-align:right;">0,00</div>
<div class="t" style="top:635px;font-size:14.1px;line-height:16px;color:#212529;left:1132.7px;width:110px;text-align:right;">83,84</div>
<div class="t" style="top:635px;font-size:14.1px;line-height:16px;color:#212529;left:1262.7px;width:110px;text-align:right;">83,84</div>
<div class="t" style="top:635px;font-size:14.1px;line-height:16px;color:#212529;left:1391.7px;width:110px;text-align:right;">100,45</div>
<div class="t" style="top:635px;font-size:14.1px;line-height:16px;color:#212529;left:1521.7px;width:110px;text-align:right;">150,00</div>
<div class="t" style="top:635px;font-size:14.1px;line-height:16px;color:#212529;left:1651.7px;width:110px;text-align:right;">0,00</div>
<div class="t" style="top:635px;font-size:14.1px;line-height:16px;color:#212529;left:1780.7px;width:110px;text-align:right;">0,00</div>
<div class="t" style="top:635px;font-size:14.1px;line-height:16px;color:#212529;left:1910.7px;width:110px;text-align:right;">250,45</div>
<div class="t" style="top:637px;font-size:12px;line-height:14px;font-weight:bold;color:#3f6fe0;left:1140.3px;font-family:'Liberation Serif',serif;font-style:italic;">f<span style='font-size:8px;margin-left:-0.5px'>x</span></div>
<div style="left:47px;top:662px;width:1986px;height:31px;background:#ece9fc;"></div>
<div style="left:154px;top:663px;width:1px;height:29.5px;background:#d1c4e9;"></div>
<div style="left:359px;top:663px;width:1px;height:29.5px;background:#d1c4e9;"></div>
<div style="left:737px;top:663px;width:1px;height:29.5px;background:#d1c4e9;"></div>
<div style="left:866px;top:663px;width:1px;height:29.5px;background:#d1c4e9;"></div>
<div style="left:996px;top:663px;width:1px;height:29.5px;background:#d1c4e9;"></div>
<div style="left:1126px;top:663px;width:1px;height:29.5px;background:#d1c4e9;"></div>
<div style="left:1255px;top:663px;width:1px;height:29.5px;background:#d1c4e9;"></div>
<div style="left:1385px;top:663px;width:1px;height:29.5px;background:#d1c4e9;"></div>
<div style="left:1514px;top:663px;width:1px;height:29.5px;background:#d1c4e9;"></div>
<div style="left:1644px;top:663px;width:1px;height:29.5px;background:#d1c4e9;"></div>
<div style="left:1774px;top:663px;width:1px;height:29.5px;background:#d1c4e9;"></div>
<div style="left:1903px;top:663px;width:1px;height:29.5px;background:#d1c4e9;"></div>
<div style="left:2033px;top:663px;width:1px;height:29.5px;background:#d1c4e9;"></div>
<div style="left:47px;top:693px;width:1987px;height:1px;background:#d1c4e9;"></div>
<div class="t" style="top:667px;font-size:14.25px;line-height:16px;font-weight:bold;color:#212529;left:46.6px;width:100px;text-align:center;">И2</div>
<div class="t" style="top:667px;font-size:14.25px;line-height:16px;font-weight:bold;color:#212529;left:372px;">Итого по Главе 2</div>
<div class="t" style="top:667px;font-size:14.5px;line-height:16px;font-weight:bold;color:#212529;left:743.7px;width:110px;text-align:right;">0,00</div>
<div class="t" style="top:667px;font-size:14.5px;line-height:16px;font-weight:bold;color:#212529;left:873.7px;width:110px;text-align:right;">0,00</div>
<div class="t" style="top:667px;font-size:14.5px;line-height:16px;font-weight:bold;color:#212529;left:1003.7px;width:110px;text-align:right;">0,00</div>
<div class="t" style="top:667px;font-size:14.5px;line-height:16px;font-weight:bold;color:#212529;left:1132.7px;width:110px;text-align:right;">83,84</div>
<div class="t" style="top:667px;font-size:14.5px;line-height:16px;font-weight:bold;color:#212529;left:1262.7px;width:110px;text-align:right;">83,84</div>
<div class="t" style="top:667px;font-size:14.5px;line-height:16px;font-weight:bold;color:#212529;left:1391.7px;width:110px;text-align:right;">100,45</div>
<div class="t" style="top:667px;font-size:14.5px;line-height:16px;font-weight:bold;color:#212529;left:1521.7px;width:110px;text-align:right;">150,00</div>
<div class="t" style="top:667px;font-size:14.5px;line-height:16px;font-weight:bold;color:#212529;left:1651.7px;width:110px;text-align:right;">0,00</div>
<div class="t" style="top:667px;font-size:14.5px;line-height:16px;font-weight:bold;color:#212529;left:1780.7px;width:110px;text-align:right;">0,00</div>
<div class="t" style="top:667px;font-size:14.5px;line-height:16px;font-weight:bold;color:#212529;left:1910.7px;width:110px;text-align:right;">250,45</div>
<div style="left:154px;top:695px;width:1px;height:45.5px;background:#d1c4e9;"></div>
<div style="left:359px;top:695px;width:1px;height:45.5px;background:#d1c4e9;"></div>
<div style="left:737px;top:695px;width:1px;height:45.5px;background:#d1c4e9;"></div>
<div style="left:1385px;top:695px;width:1px;height:45.5px;background:#d1c4e9;"></div>
<div style="left:2033px;top:695px;width:1px;height:45.5px;background:#d1c4e9;"></div>
<div style="left:47px;top:741px;width:1987px;height:1px;background:#d1c4e9;"></div>
<div class="t" style="top:700px;font-size:14.1px;line-height:16px;color:#212529;left:46.6px;width:100px;text-align:center;">3</div>
<div class="t" style="top:700px;font-size:14.25px;line-height:16px;font-weight:bold;color:#212529;left:372px;">Глава 3. Объекты подсобного и обслуживающего</div>
<div class="t" style="top:717px;font-size:14.25px;line-height:16px;font-weight:bold;color:#212529;left:372px;">назначения</div>
<div style="left:47px;top:742px;width:1986px;height:31px;background:#ece9fc;"></div>
<div style="left:154px;top:743px;width:1px;height:29.5px;background:#d1c4e9;"></div>
<div style="left:359px;top:743px;width:1px;height:29.5px;background:#d1c4e9;"></div>
<div style="left:737px;top:743px;width:1px;height:29.5px;background:#d1c4e9;"></div>
<div style="left:866px;top:743px;width:1px;height:29.5px;background:#d1c4e9;"></div>
<div style="left:996px;top:743px;width:1px;height:29.5px;background:#d1c4e9;"></div>
<div style="left:1126px;top:743px;width:1px;height:29.5px;background:#d1c4e9;"></div>
<div style="left:1255px;top:743px;width:1px;height:29.5px;background:#d1c4e9;"></div>
<div style="left:1385px;top:743px;width:1px;height:29.5px;background:#d1c4e9;"></div>
<div style="left:1514px;top:743px;width:1px;height:29.5px;background:#d1c4e9;"></div>
<div style="left:1644px;top:743px;width:1px;height:29.5px;background:#d1c4e9;"></div>
<div style="left:1774px;top:743px;width:1px;height:29.5px;background:#d1c4e9;"></div>
<div style="left:1903px;top:743px;width:1px;height:29.5px;background:#d1c4e9;"></div>
<div style="left:2033px;top:743px;width:1px;height:29.5px;background:#d1c4e9;"></div>
<div style="left:47px;top:773px;width:1987px;height:1px;background:#d1c4e9;"></div>
<div class="t" style="top:747px;font-size:14.25px;line-height:16px;font-weight:bold;color:#212529;left:46.6px;width:100px;text-align:center;">И3</div>
<div class="t" style="top:747px;font-size:14.25px;line-height:16px;font-weight:bold;color:#212529;left:372px;">Итого по Главе 3</div>
<div class="t" style="top:747px;font-size:14.5px;line-height:16px;font-weight:bold;color:#212529;left:743.7px;width:110px;text-align:right;">0,00</div>
<div class="t" style="top:747px;font-size:14.5px;line-height:16px;font-weight:bold;color:#212529;left:873.7px;width:110px;text-align:right;">0,00</div>
<div class="t" style="top:747px;font-size:14.5px;line-height:16px;font-weight:bold;color:#212529;left:1003.7px;width:110px;text-align:right;">0,00</div>
<div class="t" style="top:747px;font-size:14.5px;line-height:16px;font-weight:bold;color:#212529;left:1132.7px;width:110px;text-align:right;">0,00</div>
<div class="t" style="top:747px;font-size:14.5px;line-height:16px;font-weight:bold;color:#212529;left:1262.7px;width:110px;text-align:right;">0,00</div>
<div class="t" style="top:747px;font-size:14.5px;line-height:16px;font-weight:bold;color:#212529;left:1391.7px;width:110px;text-align:right;">0,00</div>
<div class="t" style="top:747px;font-size:14.5px;line-height:16px;font-weight:bold;color:#212529;left:1521.7px;width:110px;text-align:right;">0,00</div>
<div class="t" style="top:747px;font-size:14.5px;line-height:16px;font-weight:bold;color:#212529;left:1651.7px;width:110px;text-align:right;">0,00</div>
<div class="t" style="top:747px;font-size:14.5px;line-height:16px;font-weight:bold;color:#212529;left:1780.7px;width:110px;text-align:right;">0,00</div>
<div class="t" style="top:747px;font-size:14.5px;line-height:16px;font-weight:bold;color:#212529;left:1910.7px;width:110px;text-align:right;">0,00</div>
<div style="left:154px;top:775px;width:1px;height:30.5px;background:#d1c4e9;"></div>
<div style="left:359px;top:775px;width:1px;height:30.5px;background:#d1c4e9;"></div>
<div style="left:737px;top:775px;width:1px;height:30.5px;background:#d1c4e9;"></div>
<div style="left:1385px;top:775px;width:1px;height:30.5px;background:#d1c4e9;"></div>
<div style="left:2033px;top:775px;width:1px;height:30.5px;background:#d1c4e9;"></div>
<div style="left:47px;top:806px;width:1987px;height:1px;background:#d1c4e9;"></div>
<div class="t" style="top:780px;font-size:14.1px;line-height:16px;color:#212529;left:46.6px;width:100px;text-align:center;">4</div>
<div class="t" style="top:780px;font-size:14.25px;line-height:16px;font-weight:bold;color:#212529;left:372px;">Глава 4. Объекты энергетического хозяйства</div>
<div style="left:47px;top:807px;width:1986px;height:31px;background:#ece9fc;"></div>
<div style="left:154px;top:808px;width:1px;height:29.5px;background:#d1c4e9;"></div>
<div style="left:359px;top:808px;width:1px;height:29.5px;background:#d1c4e9;"></div>
<div style="left:737px;top:808px;width:1px;height:29.5px;background:#d1c4e9;"></div>
<div style="left:866px;top:808px;width:1px;height:29.5px;background:#d1c4e9;"></div>
<div style="left:996px;top:808px;width:1px;height:29.5px;background:#d1c4e9;"></div>
<div style="left:1126px;top:808px;width:1px;height:29.5px;background:#d1c4e9;"></div>
<div style="left:1255px;top:808px;width:1px;height:29.5px;background:#d1c4e9;"></div>
<div style="left:1385px;top:808px;width:1px;height:29.5px;background:#d1c4e9;"></div>
<div style="left:1514px;top:808px;width:1px;height:29.5px;background:#d1c4e9;"></div>
<div style="left:1644px;top:808px;width:1px;height:29.5px;background:#d1c4e9;"></div>
<div style="left:1774px;top:808px;width:1px;height:29.5px;background:#d1c4e9;"></div>
<div style="left:1903px;top:808px;width:1px;height:29.5px;background:#d1c4e9;"></div>
<div style="left:2033px;top:808px;width:1px;height:29.5px;background:#d1c4e9;"></div>
<div style="left:47px;top:838px;width:1987px;height:1px;background:#d1c4e9;"></div>
<div class="t" style="top:812px;font-size:14.25px;line-height:16px;font-weight:bold;color:#212529;left:46.6px;width:100px;text-align:center;">И4</div>
<div class="t" style="top:812px;font-size:14.25px;line-height:16px;font-weight:bold;color:#212529;left:372px;">Итого по Главе 4</div>
<div class="t" style="top:812px;font-size:14.5px;line-height:16px;font-weight:bold;color:#212529;left:743.7px;width:110px;text-align:right;">0,00</div>
<div class="t" style="top:812px;font-size:14.5px;line-height:16px;font-weight:bold;color:#212529;left:873.7px;width:110px;text-align:right;">0,00</div>
<div class="t" style="top:812px;font-size:14.5px;line-height:16px;font-weight:bold;color:#212529;left:1003.7px;width:110px;text-align:right;">0,00</div>
<div class="t" style="top:812px;font-size:14.5px;line-height:16px;font-weight:bold;color:#212529;left:1132.7px;width:110px;text-align:right;">0,00</div>
<div class="t" style="top:812px;font-size:14.5px;line-height:16px;font-weight:bold;color:#212529;left:1262.7px;width:110px;text-align:right;">0,00</div>
<div class="t" style="top:812px;font-size:14.5px;line-height:16px;font-weight:bold;color:#212529;left:1391.7px;width:110px;text-align:right;">0,00</div>
<div class="t" style="top:812px;font-size:14.5px;line-height:16px;font-weight:bold;color:#212529;left:1521.7px;width:110px;text-align:right;">0,00</div>
<div class="t" style="top:812px;font-size:14.5px;line-height:16px;font-weight:bold;color:#212529;left:1651.7px;width:110px;text-align:right;">0,00</div>
<div class="t" style="top:812px;font-size:14.5px;line-height:16px;font-weight:bold;color:#212529;left:1780.7px;width:110px;text-align:right;">0,00</div>
<div class="t" style="top:812px;font-size:14.5px;line-height:16px;font-weight:bold;color:#212529;left:1910.7px;width:110px;text-align:right;">0,00</div>
<div style="left:154px;top:840px;width:1px;height:45.5px;background:#d1c4e9;"></div>
<div style="left:359px;top:840px;width:1px;height:45.5px;background:#d1c4e9;"></div>
<div style="left:737px;top:840px;width:1px;height:45.5px;background:#d1c4e9;"></div>
<div style="left:1385px;top:840px;width:1px;height:45.5px;background:#d1c4e9;"></div>
<div style="left:2033px;top:840px;width:1px;height:45.5px;background:#d1c4e9;"></div>
<div style="left:47px;top:886px;width:1987px;height:1px;background:#d1c4e9;"></div>
<div class="t" style="top:845px;font-size:14.1px;line-height:16px;color:#212529;left:46.6px;width:100px;text-align:center;">5</div>
<div class="t" style="top:845px;font-size:14.25px;line-height:16px;font-weight:bold;color:#212529;left:372px;">Глава 5. Объекты транспортного хозяйства и</div>
<div class="t" style="top:862px;font-size:14.25px;line-height:16px;font-weight:bold;color:#212529;left:372px;">связи</div>
<div style="left:47px;top:887px;width:1986px;height:32px;background:#ece9fc;"></div>
<div style="left:154px;top:888px;width:1px;height:30.5px;background:#d1c4e9;"></div>
<div style="left:359px;top:888px;width:1px;height:30.5px;background:#d1c4e9;"></div>
<div style="left:737px;top:888px;width:1px;height:30.5px;background:#d1c4e9;"></div>
<div style="left:866px;top:888px;width:1px;height:30.5px;background:#d1c4e9;"></div>
<div style="left:996px;top:888px;width:1px;height:30.5px;background:#d1c4e9;"></div>
<div style="left:1126px;top:888px;width:1px;height:30.5px;background:#d1c4e9;"></div>
<div style="left:1255px;top:888px;width:1px;height:30.5px;background:#d1c4e9;"></div>
<div style="left:1385px;top:888px;width:1px;height:30.5px;background:#d1c4e9;"></div>
<div style="left:1514px;top:888px;width:1px;height:30.5px;background:#d1c4e9;"></div>
<div style="left:1644px;top:888px;width:1px;height:30.5px;background:#d1c4e9;"></div>
<div style="left:1774px;top:888px;width:1px;height:30.5px;background:#d1c4e9;"></div>
<div style="left:1903px;top:888px;width:1px;height:30.5px;background:#d1c4e9;"></div>
<div style="left:2033px;top:888px;width:1px;height:30.5px;background:#d1c4e9;"></div>
<div style="left:47px;top:919px;width:1987px;height:1px;background:#d1c4e9;"></div>
<div class="t" style="top:893px;font-size:14.25px;line-height:16px;font-weight:bold;color:#212529;left:46.6px;width:100px;text-align:center;">И5</div>
<div class="t" style="top:893px;font-size:14.25px;line-height:16px;font-weight:bold;color:#212529;left:372px;">Итого по Главе 5</div>
<div class="t" style="top:893px;font-size:14.5px;line-height:16px;font-weight:bold;color:#212529;left:743.7px;width:110px;text-align:right;">0,00</div>
<div class="t" style="top:893px;font-size:14.5px;line-height:16px;font-weight:bold;color:#212529;left:873.7px;width:110px;text-align:right;">0,00</div>
<div class="t" style="top:893px;font-size:14.5px;line-height:16px;font-weight:bold;color:#212529;left:1003.7px;width:110px;text-align:right;">0,00</div>
<div class="t" style="top:893px;font-size:14.5px;line-height:16px;font-weight:bold;color:#212529;left:1132.7px;width:110px;text-align:right;">0,00</div>
<div class="t" style="top:893px;font-size:14.5px;line-height:16px;font-weight:bold;color:#212529;left:1262.7px;width:110px;text-align:right;">0,00</div>
<div class="t" style="top:893px;font-size:14.5px;line-height:16px;font-weight:bold;color:#212529;left:1391.7px;width:110px;text-align:right;">0,00</div>
<div class="t" style="top:893px;font-size:14.5px;line-height:16px;font-weight:bold;color:#212529;left:1521.7px;width:110px;text-align:right;">0,00</div>
<div class="t" style="top:893px;font-size:14.5px;line-height:16px;font-weight:bold;color:#212529;left:1651.7px;width:110px;text-align:right;">0,00</div>
<div class="t" style="top:893px;font-size:14.5px;line-height:16px;font-weight:bold;color:#212529;left:1780.7px;width:110px;text-align:right;">0,00</div>
<div class="t" style="top:893px;font-size:14.5px;line-height:16px;font-weight:bold;color:#212529;left:1910.7px;width:110px;text-align:right;">0,00</div>
<div style="left:154px;top:921px;width:1px;height:63.5px;background:#d1c4e9;"></div>
<div style="left:359px;top:921px;width:1px;height:63.5px;background:#d1c4e9;"></div>
<div style="left:737px;top:921px;width:1px;height:63.5px;background:#d1c4e9;"></div>
<div style="left:1385px;top:921px;width:1px;height:63.5px;background:#d1c4e9;"></div>
<div style="left:2033px;top:921px;width:1px;height:63.5px;background:#d1c4e9;"></div>
<div style="left:47px;top:985px;width:1987px;height:1px;background:#d1c4e9;"></div>
<div class="t" style="top:925px;font-size:14.1px;line-height:16px;color:#212529;left:46.6px;width:100px;text-align:center;">6</div>
<div class="t" style="top:925px;font-size:14.25px;line-height:16px;font-weight:bold;color:#212529;left:372px;">Глава 6. Наружные сети и сооружения</div>
<div class="t" style="top:943px;font-size:14.25px;line-height:16px;font-weight:bold;color:#212529;left:372px;">водоснабжения, водоотведения,</div>
<div class="t" style="top:960px;font-size:14.25px;line-height:16px;font-weight:bold;color:#212529;left:372px;">теплоснабжения и газоснабжения</div>
<div style="left:47px;top:986px;width:1986px;height:31px;background:#ece9fc;"></div>
<div style="left:154px;top:987px;width:1px;height:29.5px;background:#d1c4e9;"></div>
<div style="left:359px;top:987px;width:1px;height:29.5px;background:#d1c4e9;"></div>
<div style="left:737px;top:987px;width:1px;height:29.5px;background:#d1c4e9;"></div>
<div style="left:866px;top:987px;width:1px;height:29.5px;background:#d1c4e9;"></div>
<div style="left:996px;top:987px;width:1px;height:29.5px;background:#d1c4e9;"></div>
<div style="left:1126px;top:987px;width:1px;height:29.5px;background:#d1c4e9;"></div>
<div style="left:1255px;top:987px;width:1px;height:29.5px;background:#d1c4e9;"></div>
<div style="left:1385px;top:987px;width:1px;height:29.5px;background:#d1c4e9;"></div>
<div style="left:1514px;top:987px;width:1px;height:29.5px;background:#d1c4e9;"></div>
<div style="left:1644px;top:987px;width:1px;height:29.5px;background:#d1c4e9;"></div>
<div style="left:1774px;top:987px;width:1px;height:29.5px;background:#d1c4e9;"></div>
<div style="left:1903px;top:987px;width:1px;height:29.5px;background:#d1c4e9;"></div>
<div style="left:2033px;top:987px;width:1px;height:29.5px;background:#d1c4e9;"></div>
<div style="left:47px;top:1017px;width:1987px;height:1px;background:#d1c4e9;"></div>
<div class="t" style="top:991px;font-size:14.25px;line-height:16px;font-weight:bold;color:#212529;left:46.6px;width:100px;text-align:center;">И6</div>
<div class="t" style="top:991px;font-size:14.25px;line-height:16px;font-weight:bold;color:#212529;left:372px;">Итого по Главе 6</div>
<div class="t" style="top:991px;font-size:14.5px;line-height:16px;font-weight:bold;color:#212529;left:743.7px;width:110px;text-align:right;">0,00</div>
<div class="t" style="top:991px;font-size:14.5px;line-height:16px;font-weight:bold;color:#212529;left:873.7px;width:110px;text-align:right;">0,00</div>
<div class="t" style="top:991px;font-size:14.5px;line-height:16px;font-weight:bold;color:#212529;left:1003.7px;width:110px;text-align:right;">0,00</div>
<div class="t" style="top:991px;font-size:14.5px;line-height:16px;font-weight:bold;color:#212529;left:1132.7px;width:110px;text-align:right;">0,00</div>
<div class="t" style="top:991px;font-size:14.5px;line-height:16px;font-weight:bold;color:#212529;left:1262.7px;width:110px;text-align:right;">0,00</div>
<div class="t" style="top:991px;font-size:14.5px;line-height:16px;font-weight:bold;color:#212529;left:1391.7px;width:110px;text-align:right;">0,00</div>
<div class="t" style="top:991px;font-size:14.5px;line-height:16px;font-weight:bold;color:#212529;left:1521.7px;width:110px;text-align:right;">0,00</div>
<div class="t" style="top:991px;font-size:14.5px;line-height:16px;font-weight:bold;color:#212529;left:1651.7px;width:110px;text-align:right;">0,00</div>
<div class="t" style="top:991px;font-size:14.5px;line-height:16px;font-weight:bold;color:#212529;left:1780.7px;width:110px;text-align:right;">0,00</div>
<div class="t" style="top:991px;font-size:14.5px;line-height:16px;font-weight:bold;color:#212529;left:1910.7px;width:110px;text-align:right;">0,00</div>
<div style="left:154px;top:1019px;width:1px;height:45.5px;background:#d1c4e9;"></div>
<div style="left:359px;top:1019px;width:1px;height:45.5px;background:#d1c4e9;"></div>
<div style="left:737px;top:1019px;width:1px;height:45.5px;background:#d1c4e9;"></div>
<div style="left:1385px;top:1019px;width:1px;height:45.5px;background:#d1c4e9;"></div>
<div style="left:2033px;top:1019px;width:1px;height:45.5px;background:#d1c4e9;"></div>
<div style="left:47px;top:1065px;width:1987px;height:1px;background:#d1c4e9;"></div>
<div class="t" style="top:1024px;font-size:14.1px;line-height:16px;color:#212529;left:46.6px;width:100px;text-align:center;">7</div>
<div class="t" style="top:1024px;font-size:14.25px;line-height:16px;font-weight:bold;color:#212529;left:372px;">Глава 7. Благоустройство и озеленение</div>
<div class="t" style="top:1041px;font-size:14.25px;line-height:16px;font-weight:bold;color:#212529;left:372px;">территории</div>
<div style="left:47px;top:1066px;width:1986px;height:32px;background:#ece9fc;"></div>
<div style="left:154px;top:1067px;width:1px;height:30.5px;background:#d1c4e9;"></div>
<div style="left:359px;top:1067px;width:1px;height:30.5px;background:#d1c4e9;"></div>
<div style="left:737px;top:1067px;width:1px;height:30.5px;background:#d1c4e9;"></div>
<div style="left:866px;top:1067px;width:1px;height:30.5px;background:#d1c4e9;"></div>
<div style="left:996px;top:1067px;width:1px;height:30.5px;background:#d1c4e9;"></div>
<div style="left:1126px;top:1067px;width:1px;height:30.5px;background:#d1c4e9;"></div>
<div style="left:1255px;top:1067px;width:1px;height:30.5px;background:#d1c4e9;"></div>
<div style="left:1385px;top:1067px;width:1px;height:30.5px;background:#d1c4e9;"></div>
<div style="left:1514px;top:1067px;width:1px;height:30.5px;background:#d1c4e9;"></div>
<div style="left:1644px;top:1067px;width:1px;height:30.5px;background:#d1c4e9;"></div>
<div style="left:1774px;top:1067px;width:1px;height:30.5px;background:#d1c4e9;"></div>
<div style="left:1903px;top:1067px;width:1px;height:30.5px;background:#d1c4e9;"></div>
<div style="left:2033px;top:1067px;width:1px;height:30.5px;background:#d1c4e9;"></div>
<div style="left:47px;top:1098px;width:1987px;height:1px;background:#d1c4e9;"></div>
<div class="t" style="top:1072px;font-size:14.25px;line-height:16px;font-weight:bold;color:#212529;left:46.6px;width:100px;text-align:center;">И7</div>
<div class="t" style="top:1072px;font-size:14.25px;line-height:16px;font-weight:bold;color:#212529;left:372px;">Итого по Главе 7</div>
<div class="t" style="top:1072px;font-size:14.5px;line-height:16px;font-weight:bold;color:#212529;left:743.7px;width:110px;text-align:right;">0,00</div>
<div class="t" style="top:1072px;font-size:14.5px;line-height:16px;font-weight:bold;color:#212529;left:873.7px;width:110px;text-align:right;">0,00</div>
<div class="t" style="top:1072px;font-size:14.5px;line-height:16px;font-weight:bold;color:#212529;left:1003.7px;width:110px;text-align:right;">0,00</div>
<div class="t" style="top:1072px;font-size:14.5px;line-height:16px;font-weight:bold;color:#212529;left:1132.7px;width:110px;text-align:right;">0,00</div>
<div class="t" style="top:1072px;font-size:14.5px;line-height:16px;font-weight:bold;color:#212529;left:1262.7px;width:110px;text-align:right;">0,00</div>
<div class="t" style="top:1072px;font-size:14.5px;line-height:16px;font-weight:bold;color:#212529;left:1391.7px;width:110px;text-align:right;">0,00</div>
<div class="t" style="top:1072px;font-size:14.5px;line-height:16px;font-weight:bold;color:#212529;left:1521.7px;width:110px;text-align:right;">0,00</div>
<div class="t" style="top:1072px;font-size:14.5px;line-height:16px;font-weight:bold;color:#212529;left:1651.7px;width:110px;text-align:right;">0,00</div>
<div class="t" style="top:1072px;font-size:14.5px;line-height:16px;font-weight:bold;color:#212529;left:1780.7px;width:110px;text-align:right;">0,00</div>
<div class="t" style="top:1072px;font-size:14.5px;line-height:16px;font-weight:bold;color:#212529;left:1910.7px;width:110px;text-align:right;">0,00</div>
<div style="left:47px;top:1099px;width:1986px;height:31px;background:#ece9fc;"></div>
<div style="left:154px;top:1100px;width:1px;height:29.5px;background:#d1c4e9;"></div>
<div style="left:359px;top:1100px;width:1px;height:29.5px;background:#d1c4e9;"></div>
<div style="left:737px;top:1100px;width:1px;height:29.5px;background:#d1c4e9;"></div>
<div style="left:866px;top:1100px;width:1px;height:29.5px;background:#d1c4e9;"></div>
<div style="left:996px;top:1100px;width:1px;height:29.5px;background:#d1c4e9;"></div>
<div style="left:1126px;top:1100px;width:1px;height:29.5px;background:#d1c4e9;"></div>
<div style="left:1255px;top:1100px;width:1px;height:29.5px;background:#d1c4e9;"></div>
<div style="left:1385px;top:1100px;width:1px;height:29.5px;background:#d1c4e9;"></div>
<div style="left:1514px;top:1100px;width:1px;height:29.5px;background:#d1c4e9;"></div>
<div style="left:1644px;top:1100px;width:1px;height:29.5px;background:#d1c4e9;"></div>
<div style="left:1774px;top:1100px;width:1px;height:29.5px;background:#d1c4e9;"></div>
<div style="left:1903px;top:1100px;width:1px;height:29.5px;background:#d1c4e9;"></div>
<div style="left:2033px;top:1100px;width:1px;height:29.5px;background:#d1c4e9;"></div>
<div style="left:47px;top:1130px;width:1987px;height:1px;background:#d1c4e9;"></div>
<div class="t" style="top:1104px;font-size:14.25px;line-height:16px;font-weight:bold;color:#212529;left:46.6px;width:100px;text-align:center;">ИГ7</div>
<div class="t" style="top:1104px;font-size:14.25px;line-height:16px;font-weight:bold;color:#212529;left:372px;">Итого по Главам 1-7</div>
<div class="t" style="top:1104px;font-size:14.5px;line-height:16px;font-weight:bold;color:#212529;left:743.7px;width:110px;text-align:right;">0,00</div>
<div class="t" style="top:1104px;font-size:14.5px;line-height:16px;font-weight:bold;color:#212529;left:873.7px;width:110px;text-align:right;">0,00</div>
<div class="t" style="top:1104px;font-size:14.5px;line-height:16px;font-weight:bold;color:#212529;left:1003.7px;width:110px;text-align:right;">0,00</div>
<div class="t" style="top:1104px;font-size:14.5px;line-height:16px;font-weight:bold;color:#212529;left:1132.7px;width:110px;text-align:right;">83,84</div>
<div class="t" style="top:1104px;font-size:14.5px;line-height:16px;font-weight:bold;color:#212529;left:1262.7px;width:110px;text-align:right;">83,84</div>
<div class="t" style="top:1104px;font-size:14.5px;line-height:16px;font-weight:bold;color:#212529;left:1391.7px;width:110px;text-align:right;">100,45</div>
<div class="t" style="top:1104px;font-size:14.5px;line-height:16px;font-weight:bold;color:#212529;left:1521.7px;width:110px;text-align:right;">150,00</div>
<div class="t" style="top:1104px;font-size:14.5px;line-height:16px;font-weight:bold;color:#212529;left:1651.7px;width:110px;text-align:right;">0,00</div>
<div class="t" style="top:1104px;font-size:14.5px;line-height:16px;font-weight:bold;color:#212529;left:1780.7px;width:110px;text-align:right;">0,00</div>
<div class="t" style="top:1104px;font-size:14.5px;line-height:16px;font-weight:bold;color:#212529;left:1910.7px;width:110px;text-align:right;">250,45</div>
<div style="left:154px;top:1132px;width:1px;height:30.5px;background:#d1c4e9;"></div>
<div style="left:359px;top:1132px;width:1px;height:30.5px;background:#d1c4e9;"></div>
<div style="left:737px;top:1132px;width:1px;height:30.5px;background:#d1c4e9;"></div>
<div style="left:1385px;top:1132px;width:1px;height:30.5px;background:#d1c4e9;"></div>
<div style="left:2033px;top:1132px;width:1px;height:30.5px;background:#d1c4e9;"></div>
<div style="left:47px;top:1163px;width:1987px;height:1px;background:#d1c4e9;"></div>
<div class="t" style="top:1137px;font-size:14.1px;line-height:16px;color:#212529;left:46.6px;width:100px;text-align:center;">8</div>
<div class="t" style="top:1137px;font-size:14.25px;line-height:16px;font-weight:bold;color:#212529;left:372px;">Глава 8. Временные здания и сооружения</div>
<div style="left:47px;top:1164px;width:1986px;height:31px;background:#ece9fc;"></div>
<div style="left:154px;top:1165px;width:1px;height:29.5px;background:#d1c4e9;"></div>
<div style="left:359px;top:1165px;width:1px;height:29.5px;background:#d1c4e9;"></div>
<div style="left:737px;top:1165px;width:1px;height:29.5px;background:#d1c4e9;"></div>
<div style="left:866px;top:1165px;width:1px;height:29.5px;background:#d1c4e9;"></div>
<div style="left:996px;top:1165px;width:1px;height:29.5px;background:#d1c4e9;"></div>
<div style="left:1126px;top:1165px;width:1px;height:29.5px;background:#d1c4e9;"></div>
<div style="left:1255px;top:1165px;width:1px;height:29.5px;background:#d1c4e9;"></div>
<div style="left:1385px;top:1165px;width:1px;height:29.5px;background:#d1c4e9;"></div>
<div style="left:1514px;top:1165px;width:1px;height:29.5px;background:#d1c4e9;"></div>
<div style="left:1644px;top:1165px;width:1px;height:29.5px;background:#d1c4e9;"></div>
<div style="left:1774px;top:1165px;width:1px;height:29.5px;background:#d1c4e9;"></div>
<div style="left:1903px;top:1165px;width:1px;height:29.5px;background:#d1c4e9;"></div>
<div style="left:2033px;top:1165px;width:1px;height:29.5px;background:#d1c4e9;"></div>
<div style="left:47px;top:1195px;width:1987px;height:1px;background:#d1c4e9;"></div>
<div class="t" style="top:1169px;font-size:14.25px;line-height:16px;font-weight:bold;color:#212529;left:46.6px;width:100px;text-align:center;">И8</div>
<div class="t" style="top:1169px;font-size:14.25px;line-height:16px;font-weight:bold;color:#212529;left:372px;">Итого по Главе 8</div>
<div class="t" style="top:1169px;font-size:14.5px;line-height:16px;font-weight:bold;color:#212529;left:743.7px;width:110px;text-align:right;">0,00</div>
<div class="t" style="top:1169px;font-size:14.5px;line-height:16px;font-weight:bold;color:#212529;left:873.7px;width:110px;text-align:right;">0,00</div>
<div class="t" style="top:1169px;font-size:14.5px;line-height:16px;font-weight:bold;color:#212529;left:1003.7px;width:110px;text-align:right;">0,00</div>
<div class="t" style="top:1169px;font-size:14.5px;line-height:16px;font-weight:bold;color:#212529;left:1132.7px;width:110px;text-align:right;">0,00</div>
<div class="t" style="top:1169px;font-size:14.5px;line-height:16px;font-weight:bold;color:#212529;left:1262.7px;width:110px;text-align:right;">0,00</div>
<div class="t" style="top:1169px;font-size:14.5px;line-height:16px;font-weight:bold;color:#212529;left:1391.7px;width:110px;text-align:right;">0,00</div>
<div class="t" style="top:1169px;font-size:14.5px;line-height:16px;font-weight:bold;color:#212529;left:1521.7px;width:110px;text-align:right;">0,00</div>
<div class="t" style="top:1169px;font-size:14.5px;line-height:16px;font-weight:bold;color:#212529;left:1651.7px;width:110px;text-align:right;">0,00</div>
<div class="t" style="top:1169px;font-size:14.5px;line-height:16px;font-weight:bold;color:#212529;left:1780.7px;width:110px;text-align:right;">0,00</div>
<div class="t" style="top:1169px;font-size:14.5px;line-height:16px;font-weight:bold;color:#212529;left:1910.7px;width:110px;text-align:right;">0,00</div>
<div style="left:47px;top:1196px;width:1986px;height:3px;background:#ece9fc;"></div>
<div style="left:154px;top:1197px;width:1px;height:2px;background:#d1c4e9;"></div>
<div style="left:359px;top:1197px;width:1px;height:2px;background:#d1c4e9;"></div>
<div style="left:737px;top:1197px;width:1px;height:2px;background:#d1c4e9;"></div>
<div style="left:866px;top:1197px;width:1px;height:2px;background:#d1c4e9;"></div>
<div style="left:996px;top:1197px;width:1px;height:2px;background:#d1c4e9;"></div>
<div style="left:1126px;top:1197px;width:1px;height:2px;background:#d1c4e9;"></div>
<div style="left:1255px;top:1197px;width:1px;height:2px;background:#d1c4e9;"></div>
<div style="left:1385px;top:1197px;width:1px;height:2px;background:#d1c4e9;"></div>
<div style="left:1514px;top:1197px;width:1px;height:2px;background:#d1c4e9;"></div>
<div style="left:1644px;top:1197px;width:1px;height:2px;background:#d1c4e9;"></div>
<div style="left:1774px;top:1197px;width:1px;height:2px;background:#d1c4e9;"></div>
<div style="left:1903px;top:1197px;width:1px;height:2px;background:#d1c4e9;"></div>
<div style="left:2033px;top:1197px;width:1px;height:2px;background:#d1c4e9;"></div>
<div style="left:2528px;top:264px;width:1px;height:935px;background:#d1c4e9;"></div>
<div style="left:2521px;top:401px;width:7.5px;height:333px;background:#ab97d3;border-radius:4px 1px 1px 4px;"></div>
<div style="left:2529px;top:458px;width:32px;height:1px;background:#d1c4e9;"></div>
<div class="t" style="left:2448.7px;top:351px;width:200px;height:20px;line-height:20px;font-size:15.25px;font-weight:bold;color:#111;text-align:center;transform:rotate(90deg) scaleY(1.12);">Список начислений</div>
<div style="left:45px;top:1199px;width:2516px;height:1px;background:#d1c4e9;"></div>
<div style="left:46px;top:1206px;width:270px;height:35px;background:#ffecb3;"></div>
<div style="left:46px;top:1200px;width:270px;height:6px;background:#ffa000;"></div>
<svg style="left:77px;top:1208px;" width="26" height="26" viewBox="77 1208 26 26"><rect x="78.1" y="1214.2" width="8.7" height="18.5" fill="#e8b361"/><rect x="88.1" y="1209" width="12.9" height="23.7" fill="#512da8"/><rect x="79.5" y="1216.9" width="1.7" height="1.9" fill="#ffecb3"/><rect x="83.2" y="1216.9" width="1.7" height="1.9" fill="#ffecb3"/><rect x="79.5" y="1221.0" width="1.7" height="1.9" fill="#ffecb3"/><rect x="83.2" y="1221.0" width="1.7" height="1.9" fill="#ffecb3"/><rect x="79.5" y="1225.0" width="1.7" height="1.9" fill="#ffecb3"/><rect x="83.2" y="1225.0" width="1.7" height="1.9" fill="#ffecb3"/><rect x="80.3" y="1229.8" width="3.6" height="1.9" fill="#ffecb3"/><rect x="89.8" y="1211.0" width="1.9" height="2" fill="#ffecb3"/><rect x="93.6" y="1211.0" width="1.9" height="2" fill="#ffecb3"/><rect x="97.4" y="1211.0" width="1.9" height="2" fill="#ffecb3"/><rect x="89.8" y="1215.0" width="1.9" height="2" fill="#ffecb3"/><rect x="93.6" y="1215.0" width="1.9" height="2" fill="#ffecb3"/><rect x="97.4" y="1215.0" width="1.9" height="2" fill="#ffecb3"/><rect x="89.8" y="1219.1" width="1.9" height="2" fill="#ffecb3"/><rect x="93.6" y="1219.1" width="1.9" height="2" fill="#ffecb3"/><rect x="97.4" y="1219.1" width="1.9" height="2" fill="#ffecb3"/><rect x="89.8" y="1223.2" width="1.9" height="2" fill="#ffecb3"/><rect x="93.6" y="1223.2" width="1.9" height="2" fill="#ffecb3"/><rect x="97.4" y="1223.2" width="1.9" height="2" fill="#ffecb3"/><rect x="92.9" y="1228" width="3.4" height="3.2" fill="#ffecb3"/></svg>
<div class="t" style="top:1210px;font-size:17.8px;line-height:20px;font-weight:bold;color:#161616;left:109px;">Новый сводный ...</div>
<svg style="left:291px;top:1212px;" width="18" height="18" viewBox="291 1212 18 18"><path d="M293.7 1214.3 L305.9 1226.7 M305.9 1214.3 L293.7 1226.7" stroke="#111" stroke-width="1.9"/></svg>
<div style="left:1977px;top:1200px;width:1px;height:38px;background:#dcdcdc;"></div>
<div class="t" style="top:1209px;font-size:17.7px;line-height:20px;font-weight:bold;color:#161616;left:1994.5px;">Всего</div>
<div class="t" style="top:1209px;font-size:18.65px;line-height:21px;color:#1e1e1e;left:2069px;">Б: 141,83 тыс. р.</div>
<div class="t" style="top:1209px;font-size:18.65px;line-height:21px;color:#1e1e1e;left:2235.3px;">Т: 446,58 тыс. р.</div>
<div style="left:0;top:0;width:2562px;height:1px;background:#6e6e6e"></div>
<div style="left:1px;top:2px;width:2560px;height:2px;background:#dfe2df"></div>
<div style="left:0;top:1241px;width:2562px;height:2px;background:#b2b9c0"></div>
<div style="left:0;top:1243px;width:2562px;height:1px;background:#c3cad2"></div>
<div style="left:0;top:1244px;width:2562px;height:1px;background:#a9adb2"></div>
<div style="left:0;top:0;width:1px;height:1245px;background:#777"></div>
<div style="left:2561px;top:0;width:1px;height:1245px;background:#777"></div>
</div></body></html>
